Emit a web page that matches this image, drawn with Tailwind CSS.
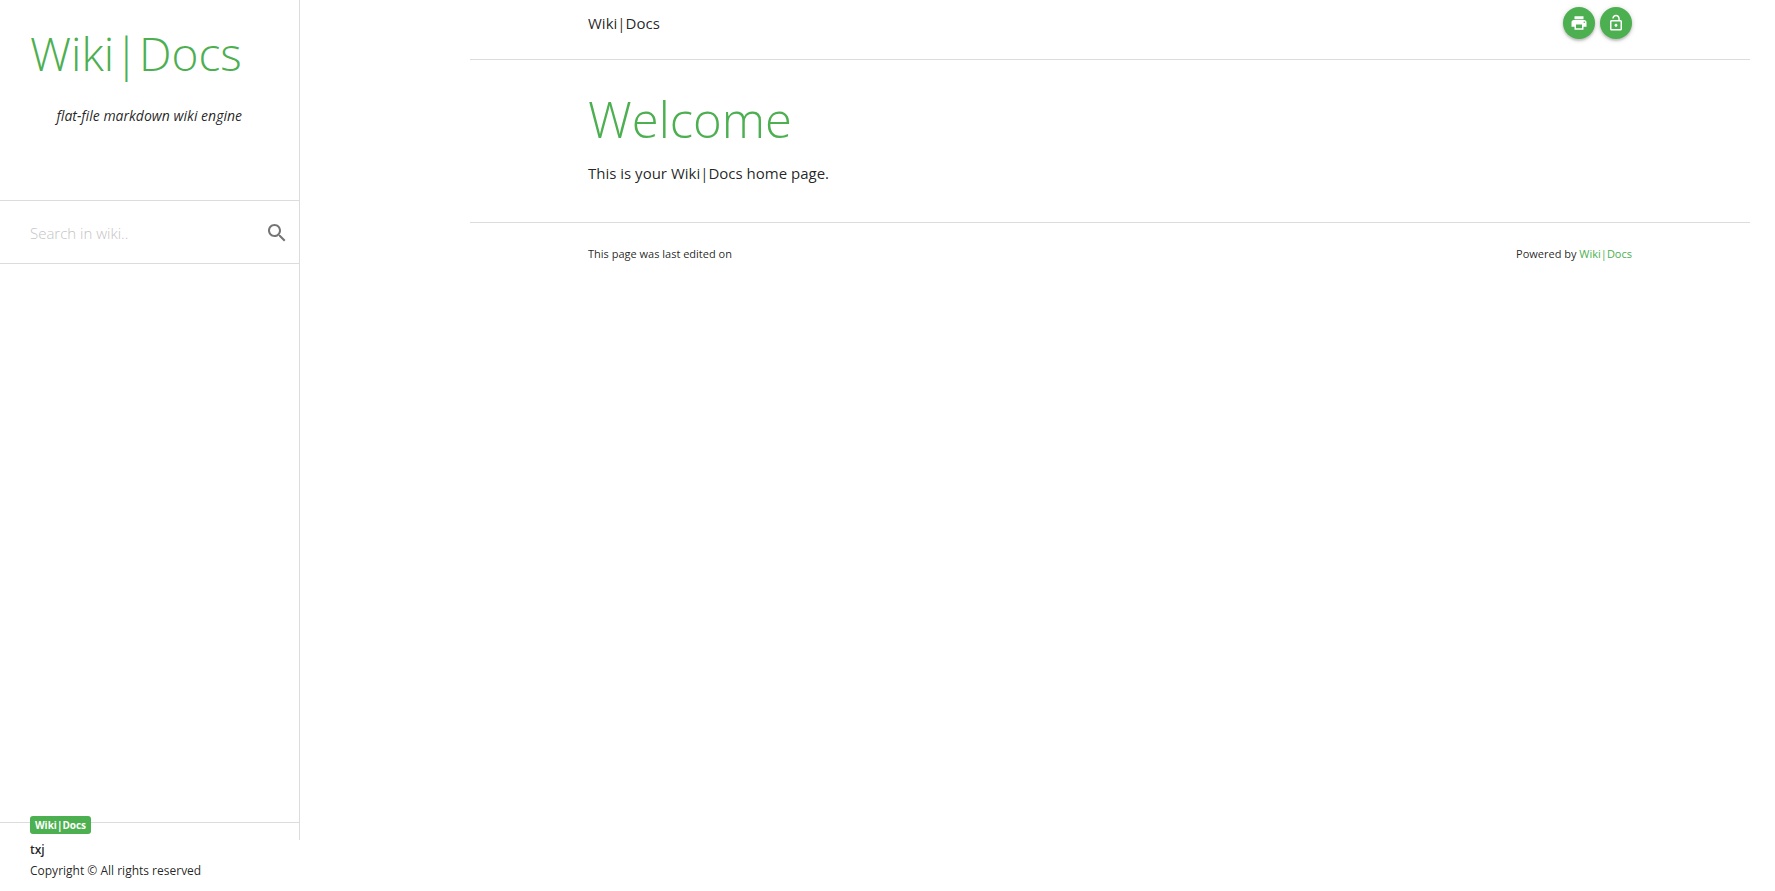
<!DOCTYPE html>
<html lang="en">
<head>
    <meta charset="UTF-8">
    <meta name="viewport" content="width=device-width, initial-scale=1.0">
    <title>Wiki|Docs</title>
    <script src="https://cdn.jsdelivr.net/npm/@tailwindcss/browser@4"></script>
</head>
<body class="flex min-h-screen bg-white font-['Open_Sans',sans-serif] text-[15px] leading-6 text-black/87">

    <!-- Sidebar -->
    <aside class="flex h-[calc(100vh-51px)] w-[300px] shrink-0 flex-col border-r border-[#dcdcdc]">
        <header class="h-[200px] pt-5 pl-[30px]">
            <h1 class="text-[46px] leading-[66px] font-light"><a href="#" class="text-[#4caf50]">Wiki|Docs</a></h1>
            <p class="mt-[18px] pr-[57px] text-right text-[14px] italic whitespace-nowrap">flat-file markdown wiki engine</p>
        </header>

        <form class="flex h-16 items-center border-y border-[#dcdcdc] pr-[10px] pl-[30px]">
            <label for="search" class="sr-only">Search in wiki</label>
            <input id="search" type="text" placeholder="Search in wiki.." class="h-10 min-w-0 flex-1 pt-[2px] text-[15px] font-light outline-none placeholder:text-[#c4c4c4]">
            <button type="submit" aria-label="Search" class="mt-[2px] text-[#757575]">
                <svg class="size-6" viewBox="0 0 24 24" fill="currentColor"><path d="M15.5 14h-.79l-.28-.27C15.41 12.59 16 11.11 16 9.5 16 5.91 13.09 3 9.5 3S3 5.91 3 9.5 5.91 16 9.5 16c1.61 0 3.09-.59 4.23-1.57l.27.28v.79l5 4.99L20.49 19l-4.99-5zm-6 0C7.01 14 5 11.99 5 9.5S7.01 5 9.5 5 14 7.01 14 9.5 11.99 14 9.5 14z"/></svg>
            </button>
        </form>

        <nav class="flex-1"></nav>

        <!-- Owner and copyright -->
        <footer class="-mb-[51px] h-[69px] border-t border-[#dcdcdc] pl-[30px] text-[12px] leading-[21px]">
            <a href="#" class="-mt-[7px] block h-[18px] w-[61px] rounded-[3px] bg-[#4caf50] text-center text-[10px] leading-[18px] font-bold text-white">Wiki|Docs</a>
            <p class="mt-[5px] font-semibold">txj</p>
            <p>Copyright © All rights reserved</p>
        </footer>
    </aside>

    <!-- Page -->
    <main class="min-w-0 flex-1 pr-[25px] pl-[170px]">
        <header class="flex h-[60px] items-start justify-between border-b border-[#dcdcdc] px-[118px] pt-[7px]">
            <a href="#" class="mt-1">Wiki|Docs</a>
            <div class="flex gap-[5px]">
                <button type="button" aria-label="Print" class="flex size-8 items-center justify-center rounded-full bg-[#4caf50] text-white shadow-[0_2px_2px_rgba(0,0,0,0.14),0_1px_5px_rgba(0,0,0,0.2)]">
                    <svg class="size-[18px]" viewBox="0 0 24 24" fill="currentColor"><path d="M19 8H5c-1.66 0-3 1.34-3 3v6h4v4h12v-4h4v-6c0-1.66-1.34-3-3-3zm-3 11H8v-5h8v5zm3-7c-.55 0-1-.45-1-1s.45-1 1-1 1 .45 1 1-.45 1-1 1zm-1-9H6v4h12V3z"/></svg>
                </button>
                <button type="button" aria-label="Log in" class="flex size-8 items-center justify-center rounded-full bg-[#4caf50] text-white shadow-[0_2px_2px_rgba(0,0,0,0.14),0_1px_5px_rgba(0,0,0,0.2)]">
                    <svg class="size-[18px]" viewBox="0 0 24 24" fill="currentColor"><path d="M12 17c1.1 0 2-.9 2-2s-.9-2-2-2-2 .9-2 2 .9 2 2 2zm6-9h-1V6c0-2.76-2.24-5-5-5S7 3.24 7 6h1.9c0-1.71 1.39-3.1 3.1-3.1s3.1 1.39 3.1 3.1v2H6c-1.1 0-2 .9-2 2v10c0 1.1.9 2 2 2h12c1.1 0 2-.9 2-2V10c0-1.1-.9-2-2-2zm0 12H6V10h12v10z"/></svg>
                </button>
            </div>
        </header>

        <article class="h-[162px] px-[118px] pt-[26px]">
            <h1 class="text-[49px] leading-[66px] font-light text-[#4caf50]">Welcome</h1>
            <p class="mt-[9px]">This is your Wiki|Docs home page.</p>
        </article>

        <footer class="flex justify-between border-t border-[#dcdcdc] px-[118px] pt-[21px] text-[11px] leading-5">
            <p>This page was last edited on</p>
            <p>Powered by <a href="#" class="text-[#4caf50]">Wiki|Docs</a></p>
        </footer>
    </main>
</body>
</html>
